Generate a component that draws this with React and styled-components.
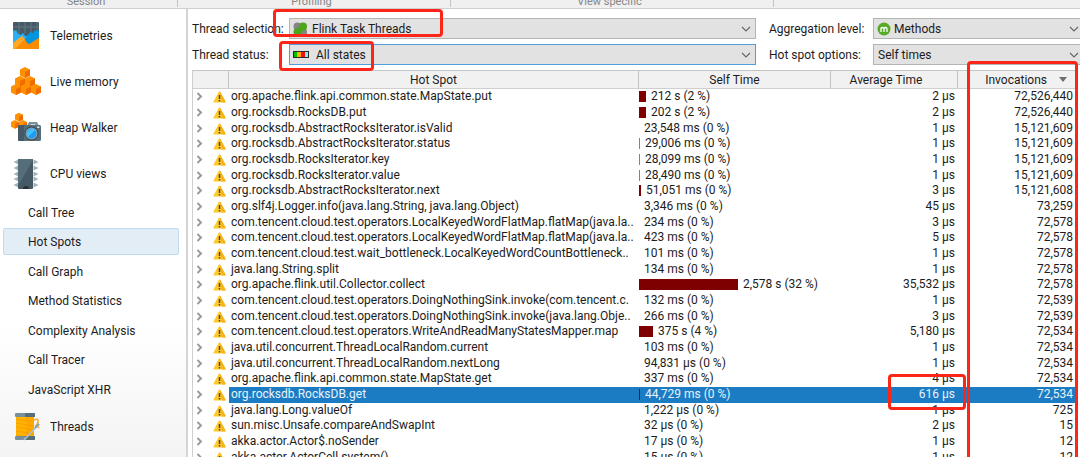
import React from "react";
import styled, { createGlobalStyle, css } from "styled-components";

const GlobalStyle = createGlobalStyle`
  * { box-sizing: border-box; }
  html, body { margin: 0; height: 100%; overflow: hidden; background: #fff; }
  body, button, select, table {
    font-family: Roboto, "Noto Sans", sans-serif;
    font-size: 12px;
    color: #1c1c1c;
  }
`;

const Window = styled.div`
  position: relative;
  display: flex;
  flex-direction: column;
  height: 100vh;
  overflow: hidden;
`;

const Ribbon = styled.header`
  display: grid;
  grid-template-columns: 178px 273px 323px 1fr;
  flex: none;
  height: 9px;
  overflow: hidden;
  background: #f0f0f0;
  border-bottom: 1px solid #cfcfcf;
`;

const RibbonGroup = styled.div`
  display: flex;
  justify-content: center;
  align-items: flex-end;
  height: 7px;
  padding-right: 5px;
  border-right: 1px solid ${(p) => (p.$last ? "transparent" : "#c4c4c4")};
  font-size: 11px;
  line-height: 11px;
  color: #858585;
`;

const Body = styled.div`
  display: flex;
  flex: 1;
  min-height: 0;
`;

const Sidebar = styled.nav`
  display: flex;
  flex-direction: column;
  flex: none;
  width: 188px;
  padding: 4px 7px 0 3px;
  border-right: 2px solid #d4d4d4;
  background: linear-gradient(#fff 70%, #f4f4f4);
  overflow: hidden;
`;

const SideButton = styled.button`
  display: flex;
  align-items: center;
  flex: none;
  gap: 7px;
  height: 46px;
  padding: 0 0 0 8px;
  border: 0;
  background: none;
  text-align: left;
  svg { flex: none; }
`;

const SubList = styled.div`
  display: flex;
  flex-direction: column;
  flex: none;
  padding: 2px 0 1px;
`;

const SubButton = styled.button`
  height: 27px;
  margin-bottom: 2px;
  padding: 0 24px;
  border: 1px solid ${(p) => (p.$active ? "#bfdcef" : "transparent")};
  border-radius: 2px;
  background: ${(p) => (p.$active ? "#e3edf6" : "none")};
  text-align: left;
  &:nth-child(even) { margin-bottom: 3px; }
  &:last-child { margin-bottom: 0; }
`;

const Main = styled.main`
  flex: 1;
  min-width: 0;
  padding: 9px 0 0 4px;
`;

const Filters = styled.div`
  display: grid;
  grid-template-columns: 97px 1fr 117px 207px;
  row-gap: 5px;
  align-items: center;
  margin-bottom: 5px;
`;

const Label = styled.label`
  padding-left: ${(p) => (p.$second ? 13 : 0)}px;
  white-space: nowrap;
`;

const Picker = styled.div`
  position: relative;
  display: flex;
  align-items: center;
  height: 21px;
  overflow: hidden;
  svg { position: absolute; pointer-events: none; }
  svg:first-child:not(:last-child) { left: 4px; }
  svg:last-child { right: ${(p) => (p.$edge ? 0 : 4)}px; }
`;

const Select = styled.select`
  appearance: none;
  width: 100%;
  height: 21px;
  padding: 0 20px 0 ${(p) => p.$indent}px;
  border: 1px solid ${(p) => (p.$focused ? "#4f9fdc" : "#b4b4b4")};
  border-right-width: ${(p) => (p.$edge ? 0 : 1)}px;
  border-radius: 0;
  background: #e2e2e2;
`;

const Table = styled.table`
  width: calc(100% - 4px);
  table-layout: fixed;
  border-collapse: separate;
  border-spacing: 0;
  border-left: 1px solid #cfcfcf;
`;

const Th = styled.th`
  height: 19px;
  padding: 0 ${(p) => p.$shift || 0}px 0 0;
  border-top: 1px solid #c4c4c4;
  border-bottom: 1px solid #cfcfcf;
  border-right: 1px solid #c4c4c4;
  background: #f1f1f1;
  font-weight: 400;
  line-height: 16px;
  text-align: center;
`;

const SortHead = styled.span`
  display: flex;
  justify-content: flex-end;
  align-items: center;
  gap: 12px;
  padding-right: 8px;
`;

const Row = styled.tr`
  height: 16px;
  &:nth-child(3n) { height: 15px; }
  ${(p) =>
    p.$selected &&
    css`
      td:not(:first-child) { background: #1b7cc3; color: #e8f2fa; }
    `}
`;

const Td = styled.td`
  height: inherit;
  padding: 0 ${(p) => (p.$num ? 3 : 0)}px 0 ${(p) => (p.$name ? 2 : 0)}px;
  overflow: hidden;
  line-height: 15px;
  vertical-align: top;
  white-space: nowrap;
  text-align: ${(p) => (p.$num ? "right" : "left")};
`;

const Marks = styled.div`
  display: flex;
  align-items: center;
  gap: 10px;
  height: 15px;
  padding-left: 3px;
`;

const Time = styled.div`
  display: flex;
  align-items: center;
  gap: 5px;
`;

const Bar = styled.span`
  flex: none;
  height: 11px;
  background: ${(p) => (p.$faint ? "#c06a6e" : "#7f0000")};
`;

const Highlight = styled.div`
  position: absolute;
  border: 3px solid #fc2618;
  border-radius: 4px;
  pointer-events: none;
  ${(p) => p.$at}
`;

const TelemetryIcon = () => (
  <svg width="32" height="32" viewBox="0 0 32 32">
    <rect x="2" y="2" width="26" height="27" rx="1" fill="#455a64" />
    <path d="M8 2v12M14 2v12M20 2v12M26 2v12M2 7h26" stroke="#607780" strokeWidth="1" />
    <path d="M2 10l2 1 1-1 2 4 3 1 2-2 2 3 3-1 2-3 3 1 2-3 2 1 2-1v14H2z" fill="#0295df" />
    <path d="M2 10l2 1 1-1 2 4 3 1 2-2 2 3 2 1-7 6H2z" fill="#29b0f5" />
    <path d="M2 23l9-7 4 5 2 3 3-1 3-2 5-3v10q0 1-1 1H3q-1 0-1-1z" fill="#fb8c00" />
    <path d="M2 23l9-7 3 3L4 29H3q-1 0-1-1z" fill="#ffa726" />
  </svg>
);

const Cube = ({ x, y }) => (
  <g transform={`translate(${x} ${y})`}>
    <path d="M5 0l5 2.500v6L5 11 0 8.500v-6z" fill="#ff9100" />
    <path d="M5 5l5-2.500v6L5 11z" fill="#ef6c00" />
  </g>
);

const MemoryIcon = () => (
  <svg width="32" height="32" viewBox="0 0 32 32">
    <Cube x={9} y={1} />
    <Cube x={4} y={10} />
    <Cube x={14} y={10} />
    <Cube x={0} y={18} />
    <Cube x={10} y={18} />
    <Cube x={20} y={18} />
  </svg>
);

const HeapIcon = () => (
  <svg width="32" height="32" viewBox="0 0 32 32">
    <g transform="scale(.8)">
      <Cube x={5} y={1} />
      <Cube x={0} y={10} />
      <Cube x={10} y={10} />
    </g>
    <path d="M16 14l2-4h8l2 4z" fill="#78909c" />
    <path d="M19 14l1-2h4l1 2z" fill="#cfd8dc" />
    <rect x="7" y="13" width="23" height="16" rx="1.500" fill="#546e7a" />
    <path d="M8 13h5v16H8.500Q7 29 7 27.500V14.500z" fill="#455a64" />
    <rect x="26" y="14.500" width="2.500" height="1.500" fill="#cfd8dc" />
    <circle cx="20.500" cy="21.500" r="7" fill="#37474f" />
    <circle cx="20.500" cy="21.500" r="6" fill="#90a4ae" />
    <circle cx="20.500" cy="21.500" r="5" fill="#1e9df0" />
    <path d="M17 25a5 5 0 0 1 7-7z" fill="#40c4ff" />
  </svg>
);

const CpuIcon = () => (
  <svg width="32" height="32" viewBox="0 0 32 32">
    {[3, 9, 15, 20, 26].map((y) => (
      <path key={y} d={`M2.500 ${y + 1}l5-2.500v5zM27.500 ${y + 1}l-5-2.500v5z`} fill="#a3b1b8" />
    ))}
    <rect x="7" y="1" width="15" height="30" rx="1" fill="#455a64" />
    <path d="M8 1h13q1 0 1 1L7 28V2q0-1 1-1z" fill="#546e7a" />
    <path d="M12 31a3 3 0 0 1 6 0z" fill="#263238" />
  </svg>
);

const ThreadsIcon = () => (
  <svg width="32" height="32" viewBox="0 0 32 32">
    <rect x="5" y="5" width="18" height="22" fill="#ffb300" />
    <path d="M5 8l18 3M5 12l18 3M5 16l18 3M5 20l18 3M5 24l12 2" stroke="#f9a000" strokeWidth="1.200" />
    <path d="M15 5h8v22h-8z" fill="#fb9800" opacity=".35" />
    <rect x="4" y="2" width="20" height="4" rx="1" fill="#78909c" />
    <rect x="14" y="2" width="10" height="4" rx="1" fill="#546e7a" />
    <rect x="4" y="25" width="20" height="4" rx="1" fill="#78909c" />
    <rect x="14" y="25" width="10" height="4" rx="1" fill="#546e7a" />
    <path d="M23 9q5-2 4 2t-3 4q2-1 4 2" stroke="#ffa726" strokeWidth="1.600" fill="none" />
    <path d="M28 13L13 29" stroke="#b0bec5" strokeWidth="1.800" />
    <path d="M28 13l-4 4" stroke="#90a4ae" strokeWidth="2.200" />
  </svg>
);

const GroupIcon = () => (
  <svg width="14" height="14" viewBox="0 0 14 14">
    <circle cx="4.500" cy="4.500" r="4" fill="#858585" />
    <circle cx="10" cy="10" r="4" fill="#858585" />
    <circle cx="10" cy="4.500" r="4" fill="#4da51c" />
    <circle cx="4.500" cy="10" r="4" fill="#4da51c" />
    <path d="M5 6l4 4" stroke="#4da51c" strokeWidth="3" />
  </svg>
);

const StatesIcon = () => (
  <svg width="16" height="7" viewBox="0 0 16 7">
    <rect width="16" height="7" fill="#2b2b2b" />
    <rect x="1" y="1" width="3" height="5" fill="#00c000" />
    <rect x="4" y="1" width="4" height="5" fill="#ffb000" />
    <rect x="8" y="1" width="4" height="5" fill="#f01010" />
    <rect x="12" y="1" width="3" height="5" fill="#80f0f0" />
  </svg>
);

const MethodIcon = () => (
  <svg width="14" height="14" viewBox="0 0 14 14">
    <circle cx="7" cy="7" r="6.500" fill="#57ab27" />
    <path d="M4 10V5.500M4 7q0-1.500 1.500-1.500T7 7v3M7 7q0-1.500 1.500-1.500T10 7v3" stroke="#fff" strokeWidth="1.300" fill="none" />
  </svg>
);

const Caret = () => (
  <svg width="12" height="12" viewBox="0 0 12 12">
    <path d="M2 4l4 4 4-4" stroke="#686868" strokeWidth="1.200" fill="none" />
  </svg>
);

const ExpandIcon = () => (
  <svg width="7" height="9" viewBox="0 0 7 9">
    <path d="M1.500 1l3.500 3.500L1.500 8" stroke="#999" strokeWidth="1.900" fill="none" />
  </svg>
);

const WarnIcon = () => (
  <svg width="13" height="12" viewBox="0 0 13 12">
    <path d="M6.500 .5q.5 0 .8.5l5.200 9.500q.4 1-.6 1H1.100q-1 0-.6-1L5.700 1q.3-.5.8-.5z" fill="#ffca28" />
    <path d="M6.500 .5q.5 0 .8.5l5.200 9.500q.4 1-.6 1H9z" fill="#f6b31c" />
    <path d="M6.500 4v4M6.500 9v1.400" stroke="#4a4038" strokeWidth="1.500" />
  </svg>
);

const SortIcon = () => (
  <svg width="8" height="5" viewBox="0 0 8 5">
    <path d="M0 0h8L4 5z" fill="#6e6e6e" />
  </svg>
);

const subItems = ["Call Tree", "Hot Spots", "Call Graph", "Method Statistics", "Complexity Analysis", "Call Tracer", "JavaScript XHR"];

const rows = [
  ["org.apache.flink.api.common.state.MapState.put", 7, "212 s (2 %)", "2 µs", "72,526,440"],
  ["org.rocksdb.RocksDB.put", 7, "202 s (2 %)", "2 µs", "72,526,440"],
  ["org.rocksdb.AbstractRocksIterator.isValid", 0, "23,548 ms (0 %)", "1 µs", "15,121,609"],
  ["org.rocksdb.AbstractRocksIterator.status", 1, "29,006 ms (0 %)", "1 µs", "15,121,609"],
  ["org.rocksdb.RocksIterator.key", 1, "28,099 ms (0 %)", "1 µs", "15,121,609"],
  ["org.rocksdb.RocksIterator.value", 1, "28,490 ms (0 %)", "1 µs", "15,121,609"],
  ["org.rocksdb.AbstractRocksIterator.next", 2, "51,051 ms (0 %)", "3 µs", "15,121,608"],
  ["org.slf4j.Logger.info(java.lang.String, java.lang.Object)", 0, "3,346 ms (0 %)", "45 µs", "73,259"],
  ["com.tencent.cloud.test.operators.LocalKeyedWordFlatMap.flatMap(java.la..", 0, "234 ms (0 %)", "3 µs", "72,578"],
  ["com.tencent.cloud.test.operators.LocalKeyedWordFlatMap.flatMap(java.la..", 0, "423 ms (0 %)", "5 µs", "72,578"],
  ["com.tencent.cloud.test.wait_bottleneck.LocalKeyedWordCountBottleneck..", 0, "101 ms (0 %)", "1 µs", "72,578"],
  ["java.lang.String.split", 0, "134 ms (0 %)", "1 µs", "72,578"],
  ["org.apache.flink.util.Collector.collect", 99, "2,578 s (32 %)", "35,532 µs", "72,578"],
  ["com.tencent.cloud.test.operators.DoingNothingSink.invoke(com.tencent.c.", 0, "132 ms (0 %)", "1 µs", "72,539"],
  ["com.tencent.cloud.test.operators.DoingNothingSink.invoke(java.lang.Obje..", 0, "266 ms (0 %)", "3 µs", "72,539"],
  ["com.tencent.cloud.test.operators.WriteAndReadManyStatesMapper.map", 14, "375 s (4 %)", "5,180 µs", "72,534"],
  ["java.util.concurrent.ThreadLocalRandom.current", 0, "103 ms (0 %)", "1 µs", "72,534"],
  ["java.util.concurrent.ThreadLocalRandom.nextLong", 0, "94,831 µs (0 %)", "1 µs", "72,534"],
  ["org.apache.flink.api.common.state.MapState.get", 0, "337 ms (0 %)", "4 µs", "72,534"],
  ["org.rocksdb.RocksDB.get", 1, "44,729 ms (0 %)", "616 µs", "72,534"],
  ["java.lang.Long.valueOf", 0, "1,222 µs (0 %)", "1 µs", "725"],
  ["sun.misc.Unsafe.compareAndSwapInt", 0, "32 µs (0 %)", "2 µs", "15"],
  ["akka.actor.Actor$.noSender", 0, "17 µs (0 %)", "1 µs", "12"],
  ["akka.actor.ActorCell.system()", 0, "15 µs (0 %)", "1 µs", "12"],
];

const selectedRow = 19;

function Field({ id, label, value, icon, indent, focused, edge }) {
  return (
    <>
      <Label htmlFor={id} $second={edge}>{label}</Label>
      <Picker $edge={edge}>
        {icon}
        <Select id={id} $indent={indent} $focused={focused} $edge={edge}>
          <option>{value}</option>
        </Select>
        <Caret />
      </Picker>
    </>
  );
}

export default function App() {
  return (
    <Window>
      <GlobalStyle />
      <Ribbon>
        <RibbonGroup>Session</RibbonGroup>
        <RibbonGroup>Profiling</RibbonGroup>
        <RibbonGroup>View specific</RibbonGroup>
        <RibbonGroup $last />
      </Ribbon>
      <Body>
        <Sidebar>
          <SideButton><TelemetryIcon />Telemetries</SideButton>
          <SideButton><MemoryIcon />Live memory</SideButton>
          <SideButton><HeapIcon />Heap Walker</SideButton>
          <SideButton><CpuIcon />CPU views</SideButton>
          <SubList>
            {subItems.map((name) => (
              <SubButton key={name} $active={name === "Hot Spots"}>{name}</SubButton>
            ))}
          </SubList>
          <SideButton><ThreadsIcon />Threads</SideButton>
        </Sidebar>
        <Main>
          <Filters>
            <Field id="selection" label="Thread selection:" value="Flink Task Threads" icon={<GroupIcon />} indent={22} />
            <Field id="level" label="Aggregation level:" value="Methods" icon={<MethodIcon />} indent={20} edge />
            <Field id="status" label="Thread status:" value="All states" icon={<StatesIcon />} indent={26} focused />
            <Field id="options" label="Hot spot options:" value="Self times" indent={4} edge />
          </Filters>
          <Table>
            <colgroup>
              <col style={{ width: 36 }} />
              <col />
              <col style={{ width: 192 }} />
              <col style={{ width: 127 }} />
              <col style={{ width: 118 }} />
            </colgroup>
            <thead>
              <tr>
                <Th />
                <Th>Hot Spot</Th>
                <Th>Self Time</Th>
                <Th $shift={16}>Average Time</Th>
                <Th><SortHead>Invocations<SortIcon /></SortHead></Th>
              </tr>
            </thead>
            <tbody>
              {rows.map(([name, bar, time, average, count], i) => (
                <Row key={i} $selected={i === selectedRow}>
                  <Td><Marks><ExpandIcon /><WarnIcon /></Marks></Td>
                  <Td $name>{name}</Td>
                  <Td>
                    <Time>
                      <Bar style={{ width: bar }} $faint={bar === 1 && i !== selectedRow} />
                      {time}
                    </Time>
                  </Td>
                  <Td $num>{average}</Td>
                  <Td $num>{count}</Td>
                </Row>
              ))}
            </tbody>
          </Table>
        </Main>
      </Body>
      <Highlight $at="left: 273px; top: 9px; width: 170px; height: 28px;" />
      <Highlight $at="left: 279px; top: 41px; width: 95px; height: 30px;" />
      <Highlight $at="right: 2px; top: 61px; bottom: -8px; width: 111px;" />
      <Highlight $at="right: 114px; top: 374px; width: 78px; height: 36px;" />
    </Window>
  );
}
